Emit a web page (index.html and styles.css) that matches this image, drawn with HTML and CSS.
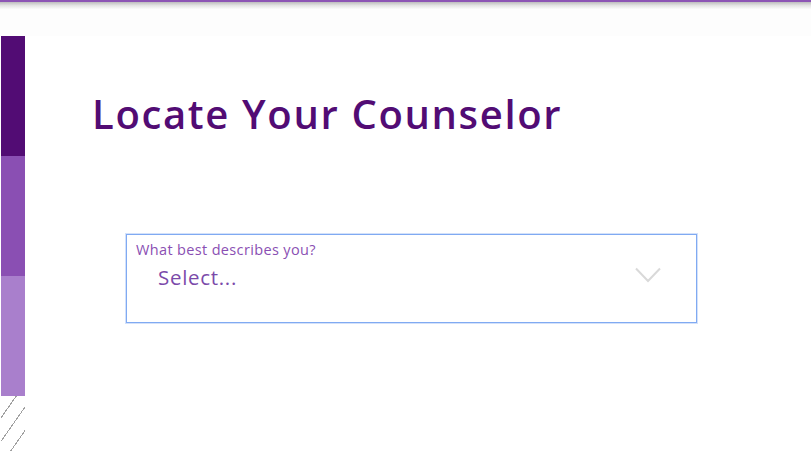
FILE: index.html
```html
<!DOCTYPE html>
<html>
<head>
<meta charset="utf-8">
<link rel="stylesheet" href="styles.css">
</head>
<body>
<div class="topbar"></div>
<div class="topshade"></div>
<div class="band"></div>
<div class="layout">
  <div class="rail">
    <div class="seg seg-dark"></div>
    <div class="seg seg-mid"></div>
    <div class="seg seg-light"></div>
    <div class="hatch"></div>
  </div>
  <main class="content">
    <h1 class="title">Locate Your Counselor</h1>
    <div class="select">
      <div class="select-label">What best describes you?</div>
      <div class="select-row">
        <span class="select-value">Select...</span>
        <svg class="chevron" width="26" height="16" viewBox="0 0 26 16"><path d="M1 1.5 L13 14 L25 1.5" fill="none" stroke="#d9d9d9" stroke-width="2"/></svg>
      </div>
    </div>
  </main>
</div>
</body>
</html>
```
FILE: styles.css
```css
html, body { margin: 0; padding: 0; background: #fff; overflow: hidden; }
body { font-family: "Open Sans", Lato, sans-serif; width: 811px; height: 451px; }
.topbar { height: 2px; background: #8d55b5; }
.topshade { height: 7px; background: linear-gradient(#bdbdbd, #e4e4e4 50%, #fbfbfb); }
.band { height: 27px; background: #fdfdfd; }
.layout { display: flex; }
.rail { width: 24px; margin-left: 1px; display: flex; flex-direction: column; }
.seg { height: 120px; }
.seg-dark { background: #520c74; }
.seg-mid { background: #8a4fb3; }
.seg-light { background: #a97fcc; }
.hatch { height: 60px; background: repeating-linear-gradient(125deg, #fff 0, #fff 12px, #a0a0a0 12px, #a0a0a0 13px, #fff 13px, #fff 13.5px); }
.content { padding-left: 67px; flex: 1; }
.title { margin: 53px 0 0; font-size: 40px; font-weight: 600; color: #520c74; letter-spacing: 1.65px; line-height: 50px; }
.select { margin: 95px 0 0 34px; width: 569px; height: 87px; border: 1px solid #80aaf2; box-shadow: 0 0 0 1px rgba(128,170,242,0.35); }
.select-label { font-size: 14.5px; color: #8a4fb3; margin: 5px 0 0 9px; line-height: 19px; letter-spacing: 0.35px; }
.select-row { display: flex; align-items: center; justify-content: space-between; padding: 0 35px 0 31px; height: 32px; }
.select-value { font-size: 20.5px; color: #7b4aaa; letter-spacing: 0.7px; margin-top: 3px; }
.chevron { display: block; margin-top: 0; }
```
